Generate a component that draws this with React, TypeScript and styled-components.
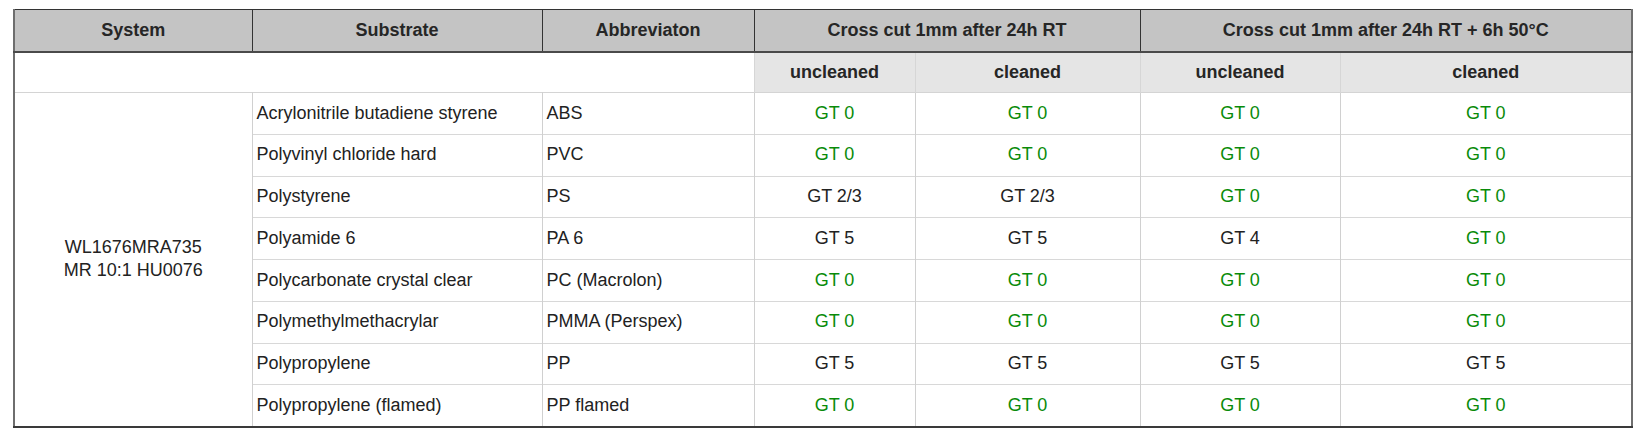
import React from "react";
import styled, { createGlobalStyle } from "styled-components";

const GlobalStyle = createGlobalStyle`
  html, body {
    margin: 0;
    padding: 0;
    background: #ffffff;
  }
  body {
    font-family: "Liberation Sans", Arial, sans-serif;
    color: #222222;
  }
`;

const Page = styled.div`
  padding: 9px 0 0 13px;
`;

const Table = styled.table`
  width: 1619px;
  table-layout: fixed;
  border-collapse: collapse;
  border-top: 1px solid #333333;
  border-left: 2px solid #6e6e6e;
  border-right: 2px solid #6e6e6e;
  border-bottom: 2px solid #3a3a3a;
  font-size: 18px;
`;

const HeadRow = styled.tr`
  height: 42px;
  background: #c4c4c4;
  border-bottom: 2px solid #4a4a4a;
`;

const HeadCell = styled.th`
  padding: 0 4px;
  font-weight: 700;
  color: #262626;
  text-align: center;
  border-left: 1px solid #333333;
  &:first-child {
    border-left: none;
  }
`;

const SubRow = styled.tr`
  height: 41px;
  border-bottom: 1px solid #d4d4d4;
`;

const SubCell = styled.th<{ $blank?: boolean }>`
  padding: 0 4px;
  font-weight: 700;
  color: #262626;
  text-align: center;
  background: ${(p) => (p.$blank ? "#ffffff" : "#e5e5e5")};
  border-left: 1px solid #d6d6d6;
`;

const BodyRow = styled.tr`
  height: 41.75px;
  border-bottom: 1px solid #d8d8d8;
  &:last-child {
    border-bottom: none;
  }
`;

const Cell = styled.td<{ $center?: boolean; $good?: boolean }>`
  padding: 0 4px;
  line-height: 23.4px;
  text-align: ${(p) => (p.$center ? "center" : "left")};
  color: ${(p) => (p.$good ? "#098b09" : "#222222")};
  border-left: 1px solid #d0d0d0;
`;

const SystemCell = styled.td`
  padding: 0 4px;
  line-height: 23.4px;
  text-align: center;
  vertical-align: middle;
  color: #222222;
`;

type Row = { substrate: string; abbr: string; results: string[] };

const ALL_ZERO = ["GT 0", "GT 0", "GT 0", "GT 0"];

const rows: Row[] = [
  { substrate: "Acrylonitrile butadiene styrene", abbr: "ABS", results: ALL_ZERO },
  { substrate: "Polyvinyl chloride hard", abbr: "PVC", results: ALL_ZERO },
  { substrate: "Polystyrene", abbr: "PS", results: ["GT 2/3", "GT 2/3", "GT 0", "GT 0"] },
  { substrate: "Polyamide 6", abbr: "PA 6", results: ["GT 5", "GT 5", "GT 4", "GT 0"] },
  { substrate: "Polycarbonate crystal clear", abbr: "PC (Macrolon)", results: ALL_ZERO },
  { substrate: "Polymethylmethacrylar", abbr: "PMMA (Perspex)", results: ALL_ZERO },
  { substrate: "Polypropylene", abbr: "PP", results: ["GT 5", "GT 5", "GT 5", "GT 5"] },
  { substrate: "Polypropylene (flamed)", abbr: "PP flamed", results: ALL_ZERO },
];

// column widths in px, measured from the reference
const widths = [238, 290, 212, 161, 225, 200, 292];

export default function App() {
  return (
    <Page>
      <GlobalStyle />
      <Table>
        <colgroup>
          {widths.map((w, i) => (
            <col key={i} style={{ width: w }} />
          ))}
        </colgroup>
        <thead>
          <HeadRow>
            <HeadCell>System</HeadCell>
            <HeadCell>Substrate</HeadCell>
            <HeadCell>Abbreviaton</HeadCell>
            <HeadCell colSpan={2}>Cross cut 1mm after 24h RT</HeadCell>
            <HeadCell colSpan={2}>Cross cut 1mm after 24h RT + 6h 50°C</HeadCell>
          </HeadRow>
          <SubRow>
            <SubCell colSpan={3} $blank />
            <SubCell>uncleaned</SubCell>
            <SubCell>cleaned</SubCell>
            <SubCell>uncleaned</SubCell>
            <SubCell>cleaned</SubCell>
          </SubRow>
        </thead>
        <tbody>
          {rows.map((row, i) => (
            <BodyRow key={row.abbr}>
              {i === 0 && (
                <SystemCell rowSpan={rows.length}>
                  WL1676MRA735
                  <br />
                  MR 10:1 HU0076
                </SystemCell>
              )}
              <Cell>{row.substrate}</Cell>
              <Cell>{row.abbr}</Cell>
              {row.results.map((r, j) => (
                <Cell key={j} $center $good={r === "GT 0"}>
                  {r}
                </Cell>
              ))}
            </BodyRow>
          ))}
        </tbody>
      </Table>
    </Page>
  );
}
